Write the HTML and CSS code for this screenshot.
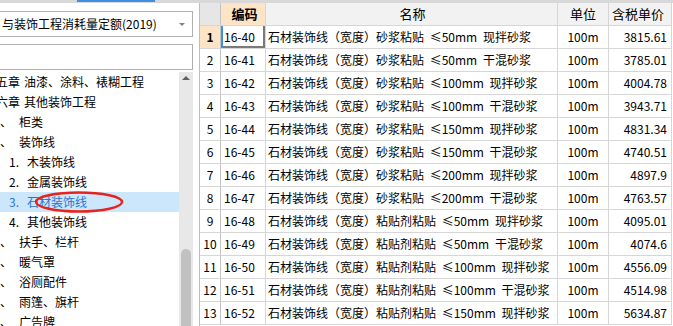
FILE: index.html
```html
<!DOCTYPE html>
<html lang="zh-CN">
<head>
    <meta charset="UTF-8">
    <title>定额库</title>
    <link rel="stylesheet" href="styles.css">
</head>
<body>
    <div class="tab-strip">
        <div class="tab-active"></div>
    </div>

    <div class="workspace">
        <aside class="side-panel">
            <div class="select-box">
                <span class="select-text">与装饰工程消耗量定额(2019)</span>
                <span class="select-arrow"></span>
            </div>
            <div class="search-box"></div>

            <div class="tree">
                <div class="tree-list">
                    <div class="tree-item lv1"><span class="num">五章</span>油漆、涂料、裱糊工程</div>
                    <div class="tree-item lv1"><span class="num">六章</span>其他装饰工程</div>
                    <div class="tree-item lv2"><span class="num">、</span>柜类</div>
                    <div class="tree-item lv2"><span class="num">、</span>装饰线</div>
                    <div class="tree-item lv3"><span class="num">1.</span>木装饰线</div>
                    <div class="tree-item lv3"><span class="num">2.</span>金属装饰线</div>
                    <div class="tree-item lv3 selected"><span class="num">3.</span>石材装饰线</div>
                    <div class="tree-item lv3"><span class="num">4.</span>其他装饰线</div>
                    <div class="tree-item lv2"><span class="num">、</span>扶手、栏杆</div>
                    <div class="tree-item lv2"><span class="num">、</span>暖气罩</div>
                    <div class="tree-item lv2"><span class="num">、</span>浴厕配件</div>
                    <div class="tree-item lv2"><span class="num">、</span>雨篷、旗杆</div>
                    <div class="tree-item lv2"><span class="num">、</span>广告牌</div>
                </div>
                <div class="scrollbar">
                    <span class="scroll-up"></span>
                    <div class="scroll-thumb"></div>
                </div>

                <!-- hand-drawn highlight over the selected node -->
                <svg class="mark" width="92" height="26" viewBox="0 0 92 26">
                    <ellipse cx="46" cy="12" rx="43" ry="9.5" fill="none" stroke="#e8231f" stroke-width="2.4"/>
                </svg>
            </div>
        </aside>

        <section class="grid">
            <div class="grid-row head">
                <div class="cell rownum"></div>
                <div class="cell code active-col">编码</div>
                <div class="cell name center">名称</div>
                <div class="cell unit">单位</div>
                <div class="cell price center">含税单价</div>
            </div>
            <div id="rows"></div>
        </section>
    </div>

    <script>
        const items = [
            ['16-40', '砂浆粘贴', '≤50mm', '现拌砂浆', '3815.61'],
            ['16-41', '砂浆粘贴', '≤50mm', '干混砂浆', '3785.01'],
            ['16-42', '砂浆粘贴', '≤100mm', '现拌砂浆', '4004.78'],
            ['16-43', '砂浆粘贴', '≤100mm', '干混砂浆', '3943.71'],
            ['16-44', '砂浆粘贴', '≤150mm', '现拌砂浆', '4831.34'],
            ['16-45', '砂浆粘贴', '≤150mm', '干混砂浆', '4740.51'],
            ['16-46', '砂浆粘贴', '≤200mm', '现拌砂浆', '4897.9'],
            ['16-47', '砂浆粘贴', '≤200mm', '干混砂浆', '4763.57'],
            ['16-48', '粘贴剂粘贴', '≤50mm', '现拌砂浆', '4095.01'],
            ['16-49', '粘贴剂粘贴', '≤50mm', '干混砂浆', '4074.6'],
            ['16-50', '粘贴剂粘贴', '≤100mm', '现拌砂浆', '4556.09'],
            ['16-51', '粘贴剂粘贴', '≤100mm', '干混砂浆', '4514.98'],
            ['16-52', '粘贴剂粘贴', '≤150mm', '现拌砂浆', '5634.87']
        ];

        const rows = document.getElementById('rows');
        items.forEach((item, i) => {
            const row = document.createElement('div');
            row.className = 'grid-row' + (i === 0 ? ' current' : '');
            row.innerHTML =
                '<div class="cell rownum">' + (i + 1) + '</div>' +
                '<div class="cell code">' + item[0] + '</div>' +
                '<div class="cell name">石材装饰线（宽度）' + item[1] + ' ' + item[2] + ' ' + item[3] + '</div>' +
                '<div class="cell unit">100m</div>' +
                '<div class="cell price">' + item[4] + '</div>';
            rows.appendChild(row);
        });
    </script>
</body>
</html>
```

FILE: styles.css
```css
* {
    margin: 0;
    padding: 0;
    box-sizing: border-box;
}

body {
    font-family: "Noto Sans CJK SC", "Liberation Sans", sans-serif;
    font-size: 12px;
    color: #000;
    background-color: #fff;
    width: 673px;
    height: 326px;
    overflow: hidden;
}

.tab-strip {
    height: 3px;
    background-color: #d8d8d8;
}

.tab-active {
    margin-left: 77px;
    width: 78px;
    height: 2px;
    background-color: #3d8fe0;
}

.workspace {
    display: flex;
    height: 323px;
}

/* left side: library picker + chapter tree */
.side-panel {
    width: 199px;
    padding-right: 6px;
    padding-top: 8px;
    display: flex;
    flex-direction: column;
    background-color: #fff;
}

.select-box,
.search-box {
    height: 26px;
    margin-left: -2px;
    border: 1px solid #b0b0b0;
    background-color: #fff;
}

.select-box {
    display: flex;
    align-items: center;
    padding-left: 3px;
    padding-right: 7px;
}

.select-text {
    flex: 1;
    white-space: nowrap;
    line-height: 16px;
    font-size: 12px;
}

.select-arrow {
    width: 0;
    height: 0;
    border-left: 3px solid transparent;
    border-right: 3px solid transparent;
    border-top: 3px solid #808080;
}

.search-box {
    margin-top: 7px;
}

.tree {
    position: relative;
    flex: 1;
    margin-top: 2px;
    display: flex;
    overflow: hidden;
}

.tree-list {
    flex: 1;
    overflow: hidden;
}

.tree-item {
    height: 20px;
    line-height: 20px;
    white-space: nowrap;
}

.tree-item .num {
    display: inline-block;
}

.lv1 .num {
    margin-left: -4px;
    width: 28px;
}

.lv2 .num {
    width: 19px;
}

.lv3 {
    padding-left: 9px;
}

.lv3 .num {
    width: 18px;
}

.tree-item.selected {
    background-color: #cce6fb;
    color: #2a76d2;
}

.scrollbar {
    width: 14px;
    background-color: #e8e8e8;
    display: flex;
    flex-direction: column;
    align-items: center;
}

.scroll-up {
    margin-top: 4px;
    width: 0;
    height: 0;
    border-left: 4px solid transparent;
    border-right: 4px solid transparent;
    border-bottom: 4px solid #606060;
}

.scroll-thumb {
    margin-top: 169px;
    width: 10px;
    flex: 1;
    background-color: #c1c1c1;
    border-radius: 5px 5px 0 0;
}

.mark {
    position: absolute;
    left: 33px;
    top: 118px;
}

/* right side: quota grid */
.grid {
    flex: 1;
    border-left: 1px solid #bdbdbd;
}

.grid-row {
    display: grid;
    grid-template-columns: 21px 45px 292px 51px 63px;
    height: 23px;
}

.cell {
    border-right: 1px solid #d6d6d6;
    border-bottom: 1px solid #d6d6d6;
    line-height: 22px;
    white-space: nowrap;
    overflow: hidden;
}

.head .cell {
    background-color: #f2f2f2;
    font-size: 13px;
    text-align: center;
}

.head .rownum {
    background-color: #e6e6e6;
}

.head .active-col {
    background-color: #fde4c6;
    font-weight: bold;
}

.rownum {
    text-align: center;
    border-right-color: #c4c4c4;
}

.current .rownum {
    background-color: #fde4c6;
    font-weight: bold;
}

.code {
    padding-left: 3px;
}

.current .code {
    box-shadow: inset 2px 0 0 #3d8fe0, inset -2px -2px 0 #7a7a7a;
}

.name {
    padding-left: 2px;
    word-spacing: 3px;
}

.unit {
    text-align: center;
}

.price {
    text-align: right;
    padding-right: 4px;
}
```
